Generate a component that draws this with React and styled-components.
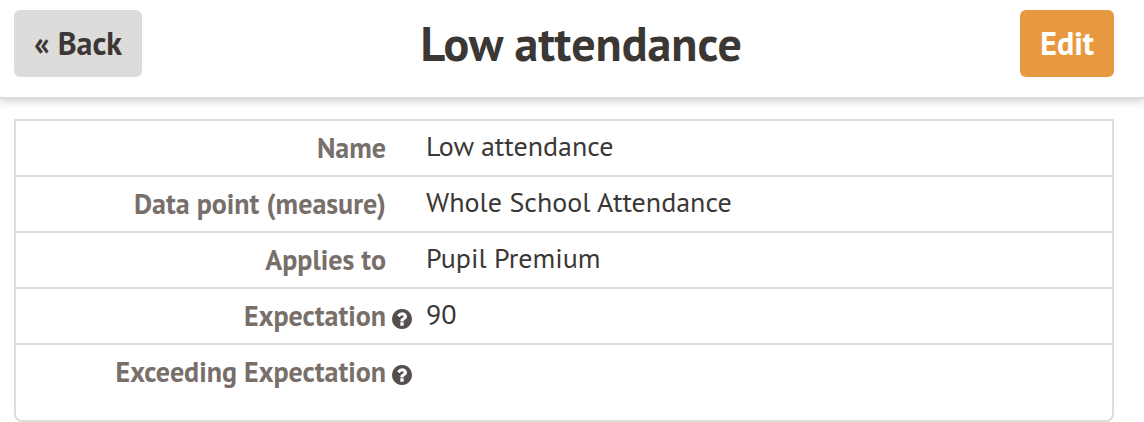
import styled, { createGlobalStyle } from "styled-components";

const GlobalStyle = createGlobalStyle`
  * {
    box-sizing: border-box;
  }

  body {
    margin: 0;
    background-color: #fff;
    color: #3b3735;
    font-family: "PT Sans", "Lato", sans-serif;
  }
`;

const Header = styled.header`
  display: flex;
  align-items: center;
  padding: 10px 30px 20px 14px;
  border-bottom: 2px solid #dcdcdc;
  box-shadow: 0 3px 8px rgba(0, 0, 0, 0.16);
`;

const Title = styled.h1`
  flex: 1;
  margin: 0;
  font-size: 48px;
  line-height: 67px;
  font-weight: 700;
  text-align: center;
`;

const Button = styled.button`
  padding: 0 20px 1px;
  border: none;
  border-radius: 6px;
  background-color: ${({ $primary }) => ($primary ? "#e8993f" : "#dddcda")};
  color: ${({ $primary }) => ($primary ? "#fff" : "#3b3735")};
  font-family: inherit;
  font-size: 32px;
  line-height: 66px;
  font-weight: 700;
  cursor: pointer;
`;

const Details = styled.dl`
  margin: 20px 30px 0 14px;
  padding-bottom: 21px;
  border: 2px solid #dcdcdc;
  border-radius: 0 0 8px 8px;
`;

const Row = styled.div`
  display: grid;
  grid-template-columns: 396px 1fr;
  column-gap: 14px;
  height: 54px;

  & + & {
    height: 56px;
    border-top: 2px solid #dcdcdc;
  }
`;

const Label = styled.dt`
  display: grid;
  grid-template-columns: 1fr 20px;
  column-gap: 6px;
  color: #786f6b;
  font-size: 28px;
  line-height: 54px;
  font-weight: 700;
  text-align: right;
`;

const Value = styled.dd`
  margin: 0;
  font-size: 28px;
  line-height: 50px;
`;

const HelpButton = styled.button`
  display: flex;
  align-items: center;
  padding: 6px 0 0;
  border: none;
  background: none;
  color: #544f4c;
  cursor: pointer;
`;

const HelpIcon = () => (
  <svg width="20" height="20" viewBox="128 128 1536 1536" fill="currentColor" aria-hidden="true">
    <path d="M1024 1376v-192q0-14-9-23t-23-9h-192q-14 0-23 9t-9 23v192q0 14 9 23t23 9h192q14 0 23-9t9-23zm256-672q0-88-55.5-163t-138.5-116-170-41q-243 0-371 213-15 24 8 42l132 100q7 6 19 6 16 0 25-12 53-68 86-92 34-24 86-24 48 0 85.5 26t37.5 59q0 38-20 61t-68 45q-63 28-115.500 86.500t-52.500 125.500v36q0 14 9 23t23 9h192q14 0 23-9t9-23q0-19 21.500-49.500t54.500-49.500q32-18 49-28.500t46-35 44.500-48 28-60.500 12.500-81zm384 192q0 209-103 385.500t-279.500 279.500-385.500 103-385.500-103-279.500-279.500-103-385.500 103-385.500 279.500-279.500 385.500-103 385.500 103 279.500 279.500 103 385.500z" />
  </svg>
);

const details = [
  { label: "Name", value: "Low attendance" },
  { label: "Data point (measure)", value: "Whole School Attendance" },
  { label: "Applies to", value: "Pupil Premium" },
  { label: "Expectation", value: "90", help: true },
  { label: "Exceeding Expectation", value: "", help: true },
];

const App = () => {
  const rows = details.map(({ label, value, help }) => (
    <Row key={label}>
      <Label>
        <span>{label}</span>
        {help && (
          <HelpButton type="button" aria-label={`Help: ${label}`}>
            <HelpIcon />
          </HelpButton>
        )}
      </Label>
      <Value>{value}</Value>
    </Row>
  ));

  return (
    <>
      <GlobalStyle />
      <Header>
        <Button type="button">« Back</Button>
        <Title>Low attendance</Title>
        <Button type="button" $primary>
          Edit
        </Button>
      </Header>
      <main>
        <Details>{rows}</Details>
      </main>
    </>
  );
};
export default App;
